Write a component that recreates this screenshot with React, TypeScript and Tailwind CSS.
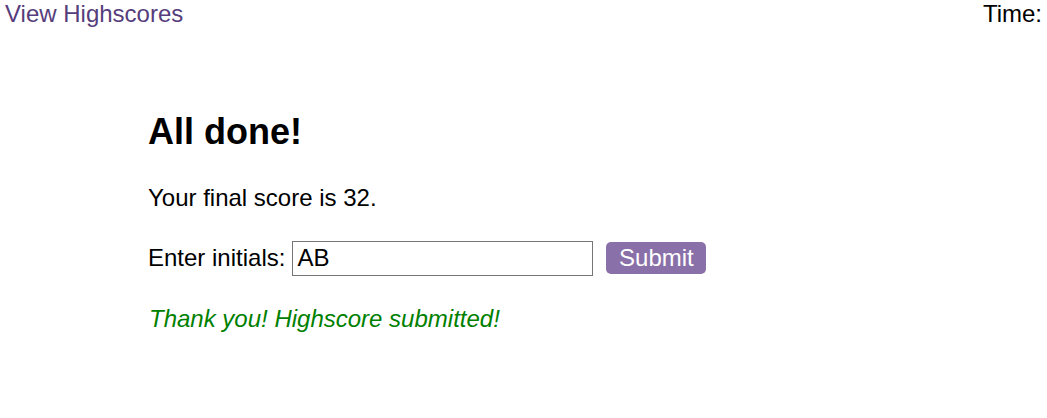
import React from "react";

export default function App() {
  return (
    <div className="min-h-[418px] bg-white text-black text-[24px]" style={{ fontFamily: '"Liberation Sans", Arial, sans-serif' }}>
      <header className="flex justify-between px-[5px] leading-[27.6px]">
        <a className="text-[#563d7c] no-underline cursor-pointer">View Highscores</a>
        <div>Time: </div>
      </header>
      <main className="mx-auto w-[751px] pt-[83px]">
        <h1 className="text-[36px] font-bold leading-[41.4px]">All done!</h1>
        <p className="mt-[32px] leading-[27.6px]">Your final score is 32.</p>
        <div className="mt-[29px] flex items-center">
          <label className="leading-[27.6px] mr-[7px]">Enter initials:</label>
          <input
            className="h-[35px] w-[301px] border border-[#767676] px-[4px] text-[24px] leading-[27.6px] outline-none"
            defaultValue="AB"
          />
          <button className="ml-[13px] h-[32px] w-[100px] rounded-[5px] bg-[#8a70a8] text-[24px] leading-[27.6px] text-white">
            Submit
          </button>
        </div>
        <p className="mt-[29px] italic text-[#008000] leading-[27.6px] pl-[1px]">Thank you! Highscore submitted!</p>
      </main>
    </div>
  );
}
